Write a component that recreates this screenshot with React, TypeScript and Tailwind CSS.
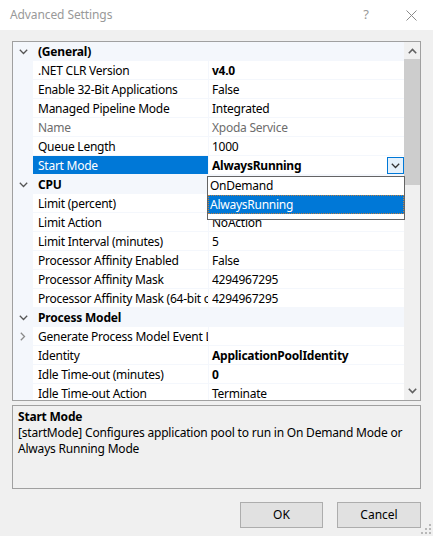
import React from "react";

type Row =
  | { kind: "cat"; label: string }
  | { kind: "prop"; label: string; value: string; bold?: boolean; gray?: boolean; selected?: boolean; expander?: boolean; dropdown?: boolean };

const rows: Row[] = [
  { kind: "cat", label: "(General)" },
  { kind: "prop", label: ".NET CLR Version", value: "v4.0", bold: true },
  { kind: "prop", label: "Enable 32-Bit Applications", value: "False" },
  { kind: "prop", label: "Managed Pipeline Mode", value: "Integrated" },
  { kind: "prop", label: "Name", value: "Xpoda Service", gray: true },
  { kind: "prop", label: "Queue Length", value: "1000" },
  { kind: "prop", label: "Start Mode", value: "AlwaysRunning", bold: true, selected: true, dropdown: true },
  { kind: "cat", label: "CPU" },
  { kind: "prop", label: "Limit (percent)", value: "0" },
  { kind: "prop", label: "Limit Action", value: "NoAction" },
  { kind: "prop", label: "Limit Interval (minutes)", value: "5" },
  { kind: "prop", label: "Processor Affinity Enabled", value: "False" },
  { kind: "prop", label: "Processor Affinity Mask", value: "4294967295" },
  { kind: "prop", label: "Processor Affinity Mask (64-bit option)", value: "4294967295" },
  { kind: "cat", label: "Process Model" },
  { kind: "prop", label: "Generate Process Model Event Log Entry", value: "", expander: true },
  { kind: "prop", label: "Identity", value: "ApplicationPoolIdentity", bold: true },
  { kind: "prop", label: "Idle Time-out (minutes)", value: "0", bold: true },
  { kind: "prop", label: "Idle Time-out Action", value: "Terminate" },
];

const ChevronDown = ({ color = "#404040" }: { color?: string }) => (
  <svg width="9" height="6" viewBox="0 0 9 6">
    <path d="M0.8 0.8 L4.5 4.5 L8.2 0.8" fill="none" stroke={color} strokeWidth="1.3" />
  </svg>
);

export default function App() {
  return (
    <div
      className="relative w-[433px] h-[536px] bg-[#f0f0f0] overflow-hidden text-[12px] text-black"
      style={{ fontFamily: '"Noto Sans", "Segoe UI", sans-serif' }}
    >
      {/* Title bar */}
      <div className="h-[30px] bg-white flex items-center pl-[10px]">
        <span className="text-[#999999] text-[12px] tracking-[-0.1px]">Advanced Settings</span>
        <span className="ml-auto text-[#999999] text-[13px] mr-[37px]">?</span>
        <svg width="11" height="11" viewBox="0 0 11 11" className="mr-[16px]">
          <path d="M0.5 0.5 L10.5 10.5 M10.5 0.5 L0.5 10.5" stroke="#8a8a8a" strokeWidth="1" />
        </svg>
      </div>

      <div className="px-[12px] pt-[11px] flex flex-col">
        {/* Property grid */}
        <div className="h-[360px] border border-[#a0a0a0] bg-white flex overflow-hidden">
          <div className="flex-1 flex flex-col overflow-hidden">
            {rows.map((r, i) =>
              r.kind === "cat" ? (
                <div key={i} className="flex h-[19px] shrink-0 bg-[#f4f7fc]">
                  <div className="w-[20px] flex justify-center items-center">
                    <ChevronDown color="#555" />
                  </div>
                  <span className="pl-[5px] pt-[2px] font-bold leading-[16px] tracking-[-0.2px]">{r.label}</span>
                </div>
              ) : (
                <div key={i} className="flex h-[19px] shrink-0">
                  <div className="w-[20px] bg-[#f4f7fc] flex justify-center items-center">
                    {r.expander && (
                      <svg width="6" height="9" viewBox="0 0 6 9">
                        <path d="M0.8 0.8 L4.5 4.5 L0.8 8.2" fill="none" stroke="#8a8a8a" strokeWidth="1.3" />
                      </svg>
                    )}
                  </div>
                  <div
                    className={
                      "w-[176px] border-r border-b border-[#f4f7fc] pl-[5px] pt-[2px] leading-[16px] overflow-hidden whitespace-nowrap tracking-[-0.25px] " +
                      (r.selected ? "bg-[#0078d7] text-white" : r.gray ? "text-[#6d6d6d]" : "")
                    }
                  >
                    {r.label}
                  </div>
                  <div
                    className={
                      "flex-1 border-b border-[#f4f7fc] pl-[3px] flex items-start whitespace-nowrap tracking-[-0.25px] " +
                      (r.bold ? "font-bold " : "") +
                      (r.gray ? "text-[#6d6d6d]" : "")
                    }
                  >
                    <span className="pt-[2px] leading-[16px]">{r.value}</span>
                    {r.dropdown && (
                      <div className="ml-auto mt-[1px] w-[17px] h-[17px] border border-[#0078d7] bg-[#e5f1fb] flex items-center justify-center">
                        <ChevronDown color="#333" />
                      </div>
                    )}
                  </div>
                </div>
              )
            )}
          </div>
          {/* Scrollbar */}
          <div className="w-[16px] bg-[#f0f0f0] flex flex-col">
            <div className="h-[17px] flex items-center justify-center">
              <svg width="9" height="6" viewBox="0 0 9 6">
                <path d="M0.8 5.2 L4.5 1.5 L8.2 5.2" fill="none" stroke="#606060" strokeWidth="1.6" />
              </svg>
            </div>
            <div className="h-[126px] bg-[#cdcdcd]" />
            <div className="flex-1" />
            <div className="h-[17px] flex items-center justify-center mb-[1px]">
              <svg width="9" height="6" viewBox="0 0 9 6">
                <path d="M0.8 0.8 L4.5 4.5 L8.2 0.8" fill="none" stroke="#606060" strokeWidth="1.6" />
              </svg>
            </div>
          </div>
        </div>

        {/* Description panel */}
        <div className="mt-[4px] h-[84px] border border-[#a0a0a0] px-[5px] pt-[3px] leading-[16px]">
          <div className="font-bold tracking-[-0.2px]">Start Mode</div>
          <div className="tracking-[-0.2px]">
            [startMode] Configures application pool to run in On Demand Mode or Always Running Mode
          </div>
        </div>

        {/* Buttons */}
        <div className="flex justify-end gap-[14px] mt-[13px]">
          <button className="w-[83px] h-[26px] bg-[#e1e1e1] border border-[#adadad] text-[12px]">OK</button>
          <button className="w-[84px] h-[26px] bg-[#e1e1e1] border border-[#adadad] text-[12px]">Cancel</button>
        </div>
      </div>

      {/* Dropdown list overlay */}
      <div className="absolute left-[207px] top-[176px] w-[198px] h-[44px] border border-[#646464] bg-white tracking-[-0.25px]">
        <div className="h-[18px] pl-[2px] pt-[1px] leading-[16px]">OnDemand</div>
        <div className="h-[19px] pl-[1px] pt-[1px] leading-[16px] bg-[#0078d7] text-white border border-dotted border-[#c08040]">
          AlwaysRunning
        </div>
      </div>

      {/* Resize grip */}
      <svg className="absolute right-[2px] bottom-[2px]" width="10" height="10" viewBox="0 0 10 10">
        <rect x="8" y="0" width="2" height="2" fill="#b8b8b8" />
        <rect x="4" y="4" width="2" height="2" fill="#b8b8b8" />
        <rect x="8" y="4" width="2" height="2" fill="#b8b8b8" />
        <rect x="0" y="8" width="2" height="2" fill="#b8b8b8" />
        <rect x="4" y="8" width="2" height="2" fill="#b8b8b8" />
        <rect x="8" y="8" width="2" height="2" fill="#b8b8b8" />
      </svg>
    </div>
  );
}
